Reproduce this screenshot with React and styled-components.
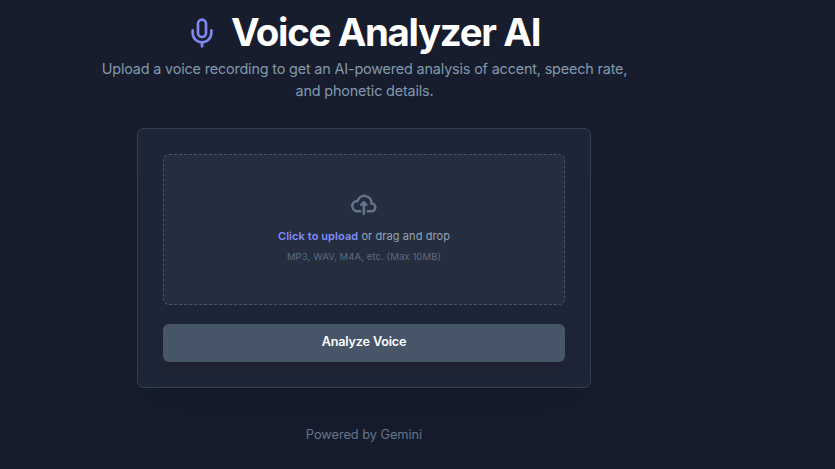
import React from 'react';
import styled, { createGlobalStyle } from 'styled-components';
import { Mic } from 'lucide-react';

const GlobalStyle = createGlobalStyle`
  * { box-sizing: border-box; }
  body { margin: 0; background: #171d2d; font-family: Inter, sans-serif; color: #fff; overflow: hidden; }
`;
const Page = styled.main`
  width: 728px;
  height: 469px;
  display: flex;
  flex-direction: column;
  align-items: center;
`;
const Title = styled.h1`
  margin: 12px 0 0;
  display: flex;
  align-items: center;
  gap: 13px;
  height: 40px;
  padding-right: 2px;
  font-size: 38.4px;
  line-height: 40px;
  font-weight: 700;
  letter-spacing: -1.33px;
`;
const MicIcon = styled(Mic)`
  width: 32px;
  height: 32px;
  margin-top: 1px;
  color: #7f88f0;
`;
const Subtitle = styled.p`
  margin: 6px 0 0;
  width: 540px;
  padding-left: 1px;
  text-align: center;
  font-size: 14.4px;
  line-height: 22px;
  letter-spacing: -0.165px;
  color: #8298ae;
`;
const Card = styled.section`
  margin-top: 26px;
  width: 454px;
  height: 260px;
  padding: 25px;
  border: 1px solid #334151;
  border-radius: 6px;
  background: #1d2636;
  box-shadow: 0 20px 40px -10px rgba(17, 24, 32, 0.8);
`;
const DropZone = styled.label`
  height: 151px;
  display: flex;
  flex-direction: column;
  align-items: center;
  padding-top: 37px;
  border: 1px dashed #475569;
  border-radius: 6px;
  background: #242e3e;
`;
const UploadIcon = styled.svg`
  width: 25.6px;
  height: 25.6px;
  color: #64748b;
`;
const Prompt = styled.span`
  margin-top: 10.4px;
  font-size: 11px;
  line-height: 16px;
  letter-spacing: 0.085px;
  color: #94a3b8;
`;
const Highlight = styled.span`
  font-weight: 600;
  color: #818cf8;
`;
const Hint = styled.span`
  margin-top: 6px;
  font-size: 9.6px;
  line-height: 14px;
  letter-spacing: 0.06px;
  color: #5c6b80;
`;
const AnalyzeButton = styled.button`
  display: block;
  width: 100%;
  height: 38px;
  margin-top: 19px;
  padding: 0 0 2px;
  border: 0;
  border-radius: 6px;
  background: #475569;
  color: #fff;
  font: 600 12.6px/20px Inter, sans-serif;
  letter-spacing: -0.15px;
  box-shadow: 0 8px 12px -2px rgba(31, 30, 45, 0.7);
`;
const Footer = styled.footer`
  margin-top: 37px;
  font-size: 12.8px;
  line-height: 20px;
  letter-spacing: -0.05px;
  color: #64748b;
`;

export default function App() {
  return (
    <>
      <GlobalStyle />
      <Page>
        <Title>
          <MicIcon />
          Voice Analyzer AI
        </Title>
        <Subtitle>Upload a voice recording to get an AI-powered analysis of accent, speech rate, and phonetic details.</Subtitle>
        <Card>
          <DropZone>
            <UploadIcon viewBox="0 0 20 16" fill="none" stroke="currentColor" strokeWidth="2" strokeLinecap="round" strokeLinejoin="round">
              <path d="M13 13h3a3 3 0 0 0 0-6h-.025A5.56 5.56 0 0 0 16 6.5 5.5 5.5 0 0 0 5.207 5.021C5.137 5.017 5.071 5 5 5a4 4 0 0 0 0 8h2.167M10 15V6m0 0L8 8m2-2 2 2" />
            </UploadIcon>
            <Prompt><Highlight>Click to upload</Highlight> or drag and drop</Prompt>
            <Hint>MP3, WAV, M4A, etc. (Max 10MB)</Hint>
          </DropZone>
          <AnalyzeButton type="button">Analyze Voice</AnalyzeButton>
        </Card>
        <Footer>Powered by Gemini</Footer>
      </Page>
    </>
  );
}
